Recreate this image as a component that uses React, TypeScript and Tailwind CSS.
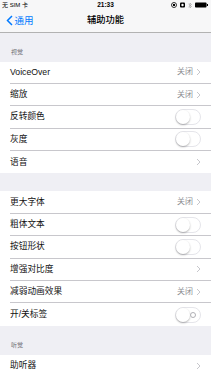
const FONT = '"Liberation Sans", "Noto Sans CJK SC", sans-serif';

type Row = { label: string; kind: 'off' | 'toggle' | 'chevron'; dot?: boolean };

const group1: Row[] = [
  { label: 'VoiceOver', kind: 'off' },
  { label: '缩放', kind: 'off' },
  { label: '反转颜色', kind: 'toggle' },
  { label: '灰度', kind: 'toggle' },
  { label: '语音', kind: 'chevron' },
];

const group2: Row[] = [
  { label: '更大字体', kind: 'off' },
  { label: '粗体文本', kind: 'toggle' },
  { label: '按钮形状', kind: 'toggle' },
  { label: '增强对比度', kind: 'chevron' },
  { label: '减弱动画效果', kind: 'off' },
  { label: '开/关标签', kind: 'toggle', dot: true },
];

const group3: Row[] = [{ label: '助听器', kind: 'chevron' }];

function Chevron() {
  return (
    <svg width="5" height="8" viewBox="0 0 5 8" className="ml-[3px]">
      <path d="M1 1l3 3-3 3" fill="none" stroke="#c7c7cc" strokeWidth="1" />
    </svg>
  );
}

function Toggle({ dot }: { dot?: boolean }) {
  return (
    <div className="relative w-[26px] h-[16px] rounded-full border border-[#e5e5ea] bg-white">
      <div className="absolute left-0 top-0 w-[14px] h-[14px] rounded-full bg-white shadow-[0_1px_2px_rgba(0,0,0,0.3)]" />
      {dot && (
        <div className="absolute right-[4px] top-[4px] w-[6px] h-[6px] rounded-full border border-[#b0b0b5]" />
      )}
    </div>
  );
}

function Group({ rows }: { rows: Row[] }) {
  return (
    <div className="bg-white">
      {rows.map((r, i) => (
        <div key={r.label} className="pl-[10px]">
          <div
            className={
              'h-[22.4px] flex items-center pr-[10px] ' +
              (i < rows.length - 1 ? 'border-b-[0.5px] border-[#c8c7cc]' : '')
            }
          >
            <span className="flex-1 text-[8.7px] text-[#111]">{r.label}</span>
            {r.kind === 'off' && (
              <span className="flex items-center text-[8px] text-[#8e8e93]">
                关闭
                <Chevron />
              </span>
            )}
            {r.kind === 'chevron' && <Chevron />}
            {r.kind === 'toggle' && <Toggle dot={r.dot} />}
          </div>
        </div>
      ))}
    </div>
  );
}

function StatusBar() {
  return (
    <div className="h-[10px] flex items-center px-[2px] text-[6px] text-black relative">
      <span>无 SIM 卡</span>
      <span className="absolute left-0 right-0 text-center font-bold text-[6.5px]">21:33</span>
      <div className="ml-auto flex items-center gap-[3px] pr-[1px]">
        <svg width="6" height="6" viewBox="0 0 6 6">
          <circle cx="3" cy="3" r="2.5" fill="none" stroke="#000" strokeWidth="0.8" />
          <rect x="2" y="2" width="2" height="2" fill="#000" />
        </svg>
        <svg width="5" height="6" viewBox="0 0 5 6">
          <rect x="0" y="0.5" width="5" height="5" rx="1" fill="#000" />
          <circle cx="2.5" cy="3" r="1.2" fill="#fff" />
        </svg>
        <svg width="4" height="7" viewBox="0 0 4 7">
          <path d="M0.5 2l3 2.5L2 6V1l1.5 1.5L0.5 5" fill="none" stroke="#999" strokeWidth="0.6" />
        </svg>
        <svg width="13" height="6" viewBox="0 0 13 6">
          <rect x="0" y="0.5" width="11.5" height="5" rx="0.8" fill="#000" />
          <rect x="11.8" y="2" width="1.2" height="2" fill="#000" />
        </svg>
      </div>
    </div>
  );
}

export default function App() {
  return (
    <div className="w-[211px] h-[375px] overflow-hidden bg-[#efeff4]" style={{ fontFamily: FONT }}>
      <div className="bg-[#f7f7f8] border-b-[0.5px] border-[#b2b2b2]">
        <StatusBar />
        <div className="h-[21.5px] flex items-center relative">
          <div className="flex items-center text-[#007aff] pl-[6px] text-[9.5px]">
            <svg width="7" height="11" viewBox="0 0 7 11" className="mr-[1.5px]">
              <path d="M6 1L1.5 5.5 6 10" fill="none" stroke="#007aff" strokeWidth="1.5" />
            </svg>
            通用
          </div>
          <div className="absolute left-0 right-0 text-center text-[9.3px] font-medium text-black">
            辅助功能
          </div>
        </div>
      </div>
      <div className="h-[29px] flex items-end pl-[11px] pb-[5px] text-[6px] text-[#6d6d72]">视觉</div>
      <Group rows={group1} />
      <div className="h-[18px]" />
      <Group rows={group2} />
      <div className="h-[29px] flex items-end pl-[11px] pb-[5px] text-[6px] text-[#6d6d72]">听觉</div>
      <Group rows={group3} />
    </div>
  );
}
